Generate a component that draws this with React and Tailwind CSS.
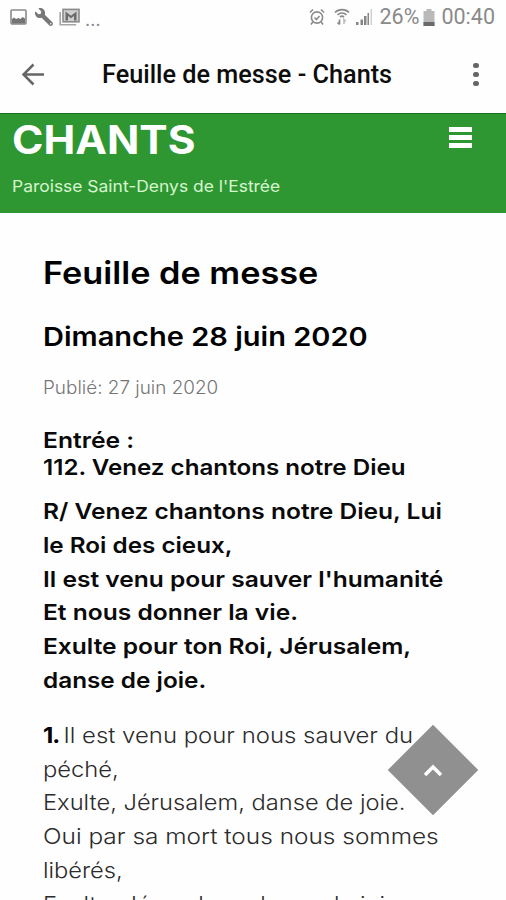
import { FaWrench } from "react-icons/fa";

function StatusBar() {
  return (
    <div className="flex h-9 shrink-0 items-center justify-between pl-[10px] pr-[11px] pb-[2px] text-[#8a8a8a]">
      <div className="flex items-center">
        {/* picture */}
        <svg width="18" height="16" viewBox="0 0 18 16">
          <rect x="1" y="1" width="15" height="14" rx="1" fill="none" stroke="currentColor" strokeWidth="1.6" />
          <path d="M2 14.500V10l2-1.500 2 1.500 2.500-1 2 1 2-2L15 9.500v5z" fill="#747474" />
        </svg>
        <FaWrench className="ml-[7px] h-[18px] w-[18px] -scale-x-100 text-[#777777]" />
        {/* mail */}
        <svg className="ml-[6px]" width="22" height="18" viewBox="0 0 22 18">
          <path d="M1.200 4v12.800h16" fill="none" stroke="#a5a5a5" strokeWidth="1.600" />
          <rect x="4" y="1.400" width="16" height="12.400" fill="#cfcfcf" stroke="currentColor" strokeWidth="1.600" />
          <path d="M6.500 12.500V3.500l5.500 4.200 5.500-4.200v9h-2.500V8l-3 2.300L9 8v4.500z" fill="#6b6b6b" />
        </svg>
        <span className="ml-[4px] mt-[3px] font-[Roboto] text-[20px] leading-none">...</span>
      </div>
      <div className="flex items-center font-[Roboto] text-[21.500px] leading-none">
        {/* alarm */}
        <svg width="16" height="18" viewBox="0 0 16 18" fill="none" stroke="currentColor" strokeWidth="1.600">
          <circle cx="8" cy="9.500" r="5.600" />
          <path d="M1 4.500L4 1.500M15 4.500L12 1.500M3.800 14L2 16.500M12.200 14L14 16.500M5.500 9.500l2 2 3-3.500" />
        </svg>
        {/* wifi */}
        <svg className="ml-[9px]" width="16" height="18" viewBox="0 0 16 18" fill="none" stroke="currentColor" strokeWidth="1.700">
          <path d="M1 4.500C4.500.6 11.500.6 15 4.500M3.500 6.800c2.500-2.400 6.500-2.400 9 0M6 9c1.200-1 2.800-1 4 0" />
          <path d="M5.500 11.500v5M3.500 14.500l2 2" />
          <path d="M10 16v-4.500l1.800 2" stroke="#c0c0c0" />
        </svg>
        {/* signal */}
        <svg className="ml-[6px]" width="17" height="16" viewBox="0 0 17 16">
          <path d="M0 13h2.500v3H0zM4.500 10.500H7V16H4.500zM8 7h2.500v9H8z" fill="#858585" />
          <path d="M11.500 4h1.500v12h-1.500z" fill="#858585" />
          <path d="M14.500 0H16v16h-1.500z" fill="#d0d0d0" />
        </svg>
        <span className="ml-[7px]">26%</span>
        {/* battery */}
        <svg className="ml-[4px]" width="12" height="17" viewBox="0 0 12 17">
          <path d="M3.500 0h5v2H11.500v15H.500V2h3z" fill="#b9b9b9" />
          <path d="M.500 13h11v4H.500z" fill="#6a6a6a" />
        </svg>
        <span className="ml-[6px]">00:40</span>
      </div>
    </div>
  );
}

function AppBar() {
  return (
    <div className="flex h-[77px] shrink-0 items-center text-[#666666]">
      <svg className="ml-[21px]" width="24" height="24" viewBox="0 0 24 24" fill="none" stroke="currentColor" strokeWidth="2.500">
        <path d="M23 11.500H2.500M12.500 1.500l-10 10 10 10" />
      </svg>
      <h1 className="ml-[56.500px] w-[359.500px] origin-left scale-x-[1.010] whitespace-nowrap font-[Roboto] text-[25px] font-medium leading-none text-[#0d0d0d]">
        Feuille de messe - Chants
      </h1>
      <div className="ml-[12px] flex flex-col gap-[3.500px]">
        <span className="h-[5.500px] w-[5.500px] rounded-full bg-current"></span>
        <span className="h-[5.500px] w-[5.500px] rounded-full bg-current"></span>
        <span className="h-[5.500px] w-[5.500px] rounded-full bg-current"></span>
      </div>
    </div>
  );
}

function SiteHeader() {
  return (
    <header className="flex h-[99.500px] shrink-0 justify-between border-t border-[#17701c] bg-[#2f9732] pl-[11.500px] pr-[34px] text-white">
      <div className="whitespace-nowrap">
        <div className="mt-[5px] origin-left scale-x-[1.090] text-[39px] font-bold leading-[42px]">CHANTS</div>
        <div className="mt-[13px] origin-left scale-x-[1.057] text-[16.500px] leading-[24px] text-[#d5f5cf]">
          Paroisse Saint-Denys de l'Estrée
        </div>
      </div>
      <div className="mt-[13px] flex flex-col gap-[3px]">
        <span className="h-[5px] w-[23px] bg-white"></span>
        <span className="h-[5px] w-[23px] bg-white"></span>
        <span className="h-[5px] w-[23px] bg-white"></span>
      </div>
    </header>
  );
}

export default function App() {
  return (
    <div className="relative flex h-[900px] w-[506px] flex-col overflow-hidden bg-[#fefefe] font-[Inter,sans-serif] text-black">
      <StatusBar />
      <AppBar />
      <SiteHeader />

      <main className="whitespace-nowrap pl-[42.500px]">
        <h2 className="mt-[40.500px] origin-left scale-x-[1.105] text-[31px] font-semibold leading-[40px]">Feuille de messe</h2>
        <h3 className="mt-[26px] origin-left scale-x-[1.116] text-[26px] font-semibold leading-[36px]">Dimanche 28 juin 2020</h3>
        <p className="mt-[19px] origin-left scale-x-[1.050] text-[18px] font-light leading-[28px] text-[#757575]">
          Publié: 27 juin 2020
        </p>

        <div className="mt-[25px] text-[22px] font-semibold leading-[27px] text-[#0a0a0a]">
          <p className="origin-left scale-x-[1.120]">Entrée :</p>
          <p className="origin-left scale-x-[1.098]">112. Venez chantons notre Dieu</p>
        </div>

        {/* refrain */}
        <div className="mt-[14px] text-[22px] font-semibold leading-[33.800px] text-[#0a0a0a]">
          <p className="origin-left scale-x-[1.115]">R/ Venez chantons notre Dieu, Lui</p>
          <p className="origin-left scale-x-[1.102]">le Roi des cieux,</p>
          <p className="origin-left scale-x-[1.116]">Il est venu pour sauver l'humanité</p>
          <p className="origin-left scale-x-[1.116]">Et nous donner la vie.</p>
          <p className="origin-left scale-x-[1.116]">Exulte pour ton Roi, Jérusalem,</p>
          <p className="origin-left scale-x-[1.105]">danse de joie.</p>
        </div>

        {/* couplet 1 */}
        <div className="mt-[21px] text-[22px] font-light leading-[33.800px] text-[#2b2b2b]">
          <p className="flex origin-left scale-x-[1.087] gap-[4px]">
            <strong className="font-bold tracking-[-1px] text-black">1.</strong>
            <span>Il est venu pour nous sauver du</span>
          </p>
          <p className="origin-left scale-x-[1.080]">péché,</p>
          <p className="origin-left scale-x-[1.076]">Exulte, Jérusalem, danse de joie.</p>
          <p className="origin-left scale-x-[1.109]">Oui par sa mort tous nous sommes</p>
          <p className="origin-left scale-x-[1.075]">libérés,</p>
          <p className="origin-left scale-x-[1.076]">Exulte, Jérusalem, danse de joie.</p>
        </div>
      </main>

      {/* back to top */}
      <button className="absolute left-[401px] top-[738px] flex h-16 w-16 rotate-45 items-center justify-center bg-[#909090]">
        <svg className="-rotate-45" width="20" height="14" viewBox="0 0 20 14" fill="none" stroke="white" strokeWidth="3.500">
          <path d="M2 12l8-8 8 8" />
        </svg>
      </button>
    </div>
  );
}
